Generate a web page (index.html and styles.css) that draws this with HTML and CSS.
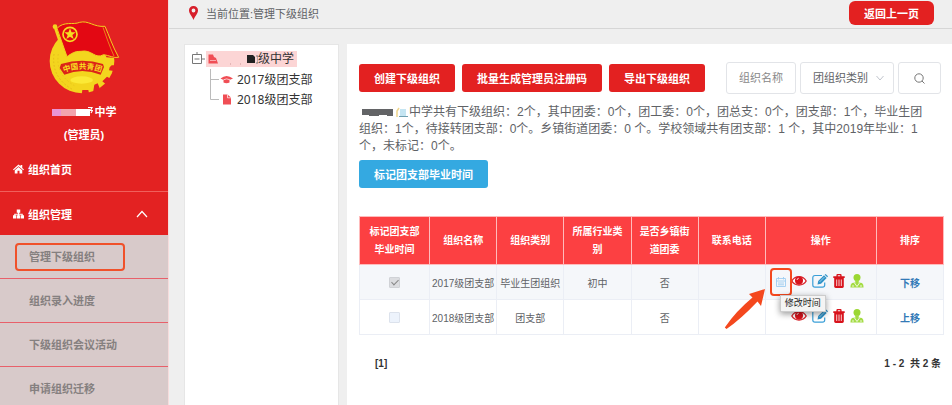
FILE: index.html
```html
<!DOCTYPE html>
<html lang="zh-CN">
<head>
  <meta charset="UTF-8">
  <meta name="viewport" content="width=device-width, initial-scale=1.0">
  <title>管理下级组织</title>
  <link rel="stylesheet" href="styles.css">
</head>
<body>
  <!-- 公用图标 -->
  <svg class="icon-defs" width="0" height="0" aria-hidden="true">
    <symbol id="icon-eye" viewBox="0 0 16 14">
      <path d="M.8 7C4 1.200 12 1.200 15.200 7C12 12.300 4 12.300 .8 7Z" fill="#fff" stroke="#d8232a" stroke-width="1.300"/>
      <circle cx="8" cy="6.500" r="4" fill="#d8131c"/>
      <path d="M6 6a2 2 0 0 1 1.800-1.800" fill="none" stroke="#fff" stroke-width=".8"/>
    </symbol>
    <symbol id="icon-edit" viewBox="0 0 16 14">
      <path d="M10 1.500H3Q.8 1.500 .8 3.700V11Q.8 13.200 3 13.200H10.500Q12.700 13.200 12.700 11V8.500" fill="none" stroke="#3a9fd8" stroke-width="1.200"/>
      <path d="M5.500 10.500L6.200 7L12 1.300L14.700 4L9 9.700Z" fill="#3193c8"/>
      <path d="M12.700 .8L13.600 0L16 2.300L15.200 3.300Z" fill="#3193c8"/>
      <path d="M7.500 8L12.500 3" stroke="#a9d8f0" stroke-width=".8"/>
    </symbol>
    <symbol id="icon-trash" viewBox="0 0 12 14">
      <path fill-rule="evenodd" d="M.3 2.300H3.400V1.200Q3.400.1 4.500.1H7.500Q8.600.1 8.600 1.200V2.300H11.700V3.900H.3ZM4.800 1.300V2.300H7.200V1.300Z" fill="#d8131c"/>
      <path d="M1.200 3.900H10.800V12.500Q10.800 13.900 9.400 13.900H2.600Q1.200 13.900 1.200 12.500Z" fill="#d8131c"/>
      <path d="M3.700 5.500V12M6 5.500V12M8.300 5.500V12" stroke="#fff" stroke-width=".8"/>
    </symbol>
    <symbol id="icon-user" viewBox="0 0 14 14">
      <circle cx="7" cy="3.600" r="3.500" fill="#9bd732"/>
      <path d="M4.800 6H9.200L8.500 8.500L12 9Q13.700 10 13.600 13.600H.4Q.3 10 2 9L5.500 8.500Z" fill="#a4dc45"/>
      <path d="M4.500 9L7 12.500L9.500 9M3 11V13M11 11V13" fill="none" stroke="#fff" stroke-width=".8"/>
    </symbol>
  </svg>

  <div class="layout">
    <aside class="sidebar">
      <div class="profile">
        <svg class="emblem" viewBox="21 18 216 222" role="img" aria-label="团徽">
          <circle cx="123" cy="141" r="97" fill="#f3d51e"/>
          <path d="M172 60L240 90V134L196 130Z" fill="#e32222"/>
          <path d="M212 154L224 154V172L204 169L206 160ZM198 188L212 196L198 214L184 202ZM160 212L170 208L176 222L166 240L156 236ZM124 228H142L145 242H122Z" fill="#e32222"/>
          <path d="M39 120Q30 190 94 226" fill="none" stroke="#dcae18" stroke-width="2" stroke-dasharray="5 6"/>
          <path d="M52 120Q42 180 100 215" fill="none" stroke="#e3bd1c" stroke-width="2" stroke-dasharray="5 6"/>
          <ellipse cx="122" cy="198" rx="34" ry="11" fill="#fbe936"/>
          <path d="M43 42L74 134" stroke="#f3d51e" stroke-width="8"/>
          <circle cx="42" cy="38" r="7" fill="#f3d51e"/>
          <path d="M48 43C70 20 96 34 116 25C142 18 158 40 192 37C204 64 214 96 233 130C218 133 204 124 188 122C162 137 152 105 120 112C100 112 92 118 78 128Z" fill="#e30813" stroke="#f2cf1f" stroke-width="3"/>
          <path d="M186 40C195 66 206 98 219 126" fill="none" stroke="#f0bb20" stroke-width="2"/>
          <circle cx="87" cy="61" r="21" fill="none" stroke="#f5dc21" stroke-width="5"/>
          <path d="M87 43L91.500 55L104 55L94 63L98 75L87 68L76 75L80 63L70 55L82.500 55Z" fill="#f5dc21"/>
          <path d="M60 150Q124 130 186 150L189 159L179 182Q124 160 70 182L56 162Z" fill="#dc2418"/>
          <path id="band" d="M65 176Q124 154 184 176" fill="none"/>
          <text class="emblem-text"><textPath href="#band" startOffset="50%">中国共青团</textPath></text>
        </svg>
        <div class="profile-name">
          <svg class="name-mask" width="41" height="12" viewBox="0 0 41 12" aria-hidden="true">
            <path d="M0 3H9V10H0Z" fill="#e994d4"/>
            <path d="M9 3H24V10H9Z" fill="#f2a4ad"/>
            <path d="M24 3H38V10H24Z" fill="#fff"/>
            <path d="M36 1.500H40L38.500 4.500H40.500L39 7" fill="none" stroke="#fff" stroke-width="1.200"/>
          </svg>
          <span>中学</span>
        </div>
        <div class="profile-role">(管理员)</div>
      </div>
      <nav>
        <a class="nav-item" href="#">
          <svg width="11" height="10" viewBox="0 0 22 20" aria-hidden="true">
            <path d="M11 1L15 4.500V2H18.500V8L22 11L20.500 12.500L11 4.500L1.500 12.500L0 11Z" fill="#fff"/>
            <path d="M11 6L18.500 12.300V19H13V13.500H9V19H3.500V12.300Z" fill="#fff"/>
          </svg>
          组织首页
        </a>
        <a class="nav-item nav-group" href="#">
          <svg width="11" height="10" viewBox="0 0 22 20" aria-hidden="true">
            <path d="M7.500 1H14.500V7.500H12.200V9.500H19.500V12.500H22V19H15.500V12.500H17.300V11.700H12.200V12.500H14.300V19H7.700V12.500H9.800V11.700H4.700V12.500H6.500V19H0V12.500H2.500V9.500H9.800V7.500H7.500Z" fill="#fff"/>
          </svg>
          组织管理
          <svg class="nav-arrow" width="12" height="8" viewBox="0 0 12 8" aria-hidden="true">
            <path d="M1 7L6 1.500L11 7" fill="none" stroke="#fff" stroke-width="1.200"/>
          </svg>
        </a>
        <ul class="submenu">
          <li><a class="current" href="#">管理下级组织</a></li>
          <li><a href="#">组织录入进度</a></li>
          <li><a href="#">下级组织会议活动</a></li>
          <li><a href="#">申请组织迁移</a></li>
        </ul>
      </nav>
    </aside>

    <main class="main">
      <header class="topbar">
        <svg width="9" height="14" viewBox="0 0 9 14" aria-hidden="true">
          <path fill-rule="evenodd" d="M4.500 0A4.400 4.400 0 0 1 9 4.500C9 7.500 6 10 4.500 14C3 10 0 7.500 0 4.500A4.400 4.400 0 0 1 4.500 0ZM4.500 2.600A1.900 1.900 0 1 0 4.500 6.400A1.900 1.900 0 1 0 4.500 2.600Z" fill="#d71f2b"/>
        </svg>
        <span>当前位置:管理下级组织</span>
        <button class="btn btn-back" type="button">返回上一页</button>
      </header>

      <div class="content">
        <!-- 组织树 -->
        <section class="tree">
          <div class="tree-row">
            <svg width="14" height="16" viewBox="0 0 14 16" aria-hidden="true">
              <path d="M1.500 3.500H10.500V12.500H1.500ZM3.500 8H8.500M11 8H14M6 1V3" fill="none" stroke="#777"/>
            </svg>
            <a class="tree-root" href="#">
              <svg width="52" height="14" viewBox="0 0 52 14" aria-hidden="true">
                <path d="M2.500 2.500H7L8 5L10 6L12 11.500H2.500Z" fill="#f04e55"/>
                <path d="M4 8.500L10 8.500" stroke="#fcd5d5" stroke-width=".7"/>
                <path d="M24 12H25M34 12H35" stroke="#c99"/>
                <path d="M41 3H47L49 5V11H41Z" fill="#222"/>
                <path d="M50 4H52V11H50" fill="none" stroke="#777"/>
              </svg>级中学</a>
          </div>
          <div class="tree-row tree-leaf">
            <svg width="30" height="20" viewBox="0 0 30 20" aria-hidden="true">
              <path d="M5.500 0V20M5.500 10.500H14" fill="none" stroke="#bbb"/>
              <path d="M15.500 9.500Q21.500 4.500 28 9.500L24.500 11V13.500Q21.500 15 18.500 13.500V11Z" fill="#f04e55"/>
              <path d="M18.500 10.800Q21.500 9 25 10.800" fill="none" stroke="#fff" stroke-width=".7"/>
            </svg>
            <a href="#">2017级团支部</a>
          </div>
          <div class="tree-row tree-leaf">
            <svg width="30" height="20" viewBox="0 0 30 20" aria-hidden="true">
              <path d="M5.500 0V10.500H14" fill="none" stroke="#bbb"/>
              <path d="M18 5.500H22.500L26 8.500V15.500H18Z" fill="#f04e55"/>
              <path d="M22.500 5.500V8.800H26" fill="none" stroke="#fff" stroke-width=".7"/>
            </svg>
            <a href="#">2018级团支部</a>
          </div>
        </section>

        <section class="panel">
          <div class="toolbar">
            <button class="btn" type="button">创建下级组织</button>
            <button class="btn" type="button">批量生成管理员注册码</button>
            <button class="btn" type="button">导出下级组织</button>
            <form class="search">
              <input class="field field-name" type="text" placeholder="组织名称" aria-label="组织名称">
              <div class="select-wrap">
                <select class="field" aria-label="团组织类别">
                  <option>团组织类别</option>
                </select>
                <svg class="select-arrow" width="8" height="6" viewBox="0 0 8 6" aria-hidden="true">
                  <path d="M.5 1L4 5L7.500 1" fill="none" stroke="#c0c4cc"/>
                </svg>
              </div>
              <button class="field field-search" type="button" aria-label="搜索">
                <svg width="11" height="11" viewBox="0 0 11 11" aria-hidden="true">
                  <path d="M5 .8A4.200 4.200 0 1 0 5 9.200A4.200 4.200 0 1 0 5 .8M8 8L10.500 10.500" fill="none" stroke="#777"/>
                </svg>
              </button>
            </form>
          </div>

          <p class="summary">
            <svg class="summary-mask" width="50" height="12" viewBox="0 0 50 12" aria-hidden="true">
              <path d="M3 3H34V10H28V9H20V10H10V9H3Z" fill="#636466"/>
              <path d="M40 2L38 5V11" fill="none" stroke="#efd58a" stroke-width="1.500"/>
              <path d="M41 3H47V10H41Z" fill="#c5e5f2"/>
              <path d="M40 10.500H49" stroke="#6fa0b0"/>
            </svg>中学共有下级组织：2个，其中团委：0个，团工委：0个，团总支：0个，团支部：1个，毕业生团<br>
            组织：1个，待接转团支部：0个。乡镇街道团委：0 个。学校领域共有团支部：1 个，其中2019年毕业：1<br>
            个，未标记：0个。
          </p>
          <button class="btn btn-mark" type="button">标记团支部毕业时间</button>

          <table class="org-table">
            <thead>
              <tr>
                <th class="col-check">标记团支部毕业时间</th>
                <th>组织名称</th>
                <th>组织类别</th>
                <th>所属行业类别</th>
                <th>是否乡镇街道团委</th>
                <th>联系电话</th>
                <th class="col-ops">操作</th>
                <th>排序</th>
              </tr>
            </thead>
            <tbody>
              <tr>
                <td><input type="checkbox" aria-label="标记2017级团支部" checked disabled></td>
                <td>2017级团支部</td>
                <td>毕业生团组织</td>
                <td>初中</td>
                <td>否</td>
                <td></td>
                <td>
                  <div class="ops">
                    <div class="time-op">
                      <button class="op" type="button" aria-label="修改时间">
                        <svg width="10" height="10" viewBox="0 0 10 10" aria-hidden="true">
                          <path d="M.5 1.500H9.500V9.500H.5ZM.5 4H9.500M2.500 0V2.500M7.500 0V2.500M2 6H8M2 7.800H8" fill="none" stroke="#9fcdf0" stroke-width=".9"/>
                        </svg>
                      </button>
                      <span class="tooltip">修改时间</span>
                      <svg class="pointer" width="42" height="42" viewBox="0 0 42 42" aria-hidden="true">
                        <path d="M41 1L37 18L33.500 13.500Q17 31 2.500 41L.8 39.500Q12 23 28.500 9.500L25 6Z" fill="#f4481e"/>
                      </svg>
                    </div>
                    <button class="op" type="button" aria-label="查看"><svg width="16" height="14"><use href="#icon-eye"/></svg></button>
                    <button class="op" type="button" aria-label="编辑"><svg width="16" height="14"><use href="#icon-edit"/></svg></button>
                    <button class="op" type="button" aria-label="删除"><svg width="12" height="14"><use href="#icon-trash"/></svg></button>
                    <button class="op" type="button" aria-label="管理员"><svg width="14" height="14"><use href="#icon-user"/></svg></button>
                  </div>
                </td>
                <td><a href="#">下移</a></td>
              </tr>
              <tr>
                <td><input type="checkbox" aria-label="标记2018级团支部" disabled></td>
                <td>2018级团支部</td>
                <td>团支部</td>
                <td></td>
                <td>否</td>
                <td></td>
                <td>
                  <div class="ops">
                    <button class="op" type="button" aria-label="查看"><svg width="16" height="14"><use href="#icon-eye"/></svg></button>
                    <button class="op" type="button" aria-label="编辑"><svg width="16" height="14"><use href="#icon-edit"/></svg></button>
                    <button class="op" type="button" aria-label="删除"><svg width="12" height="14"><use href="#icon-trash"/></svg></button>
                    <button class="op" type="button" aria-label="管理员"><svg width="14" height="14"><use href="#icon-user"/></svg></button>
                  </div>
                </td>
                <td><a href="#">上移</a></td>
              </tr>
            </tbody>
          </table>

          <div class="pager">
            <span>[1]</span>
            <span>1 - 2 &nbsp;共 2 条</span>
          </div>
        </section>
      </div>
    </main>
  </div>
</body>
</html>
```

FILE: styles.css
```css
* {
  box-sizing: border-box;
}
body {
  margin: 0;
  font-family: "Liberation Sans", "Noto Sans CJK SC", sans-serif;
  font-size: 11px;
  color: #606266;
}
a {
  color: inherit;
  text-decoration: none;
}
button, input, select {
  font-family: inherit;
  font-size: 11px;
}
svg {
  flex-shrink: 0;
}
.icon-defs {
  position: absolute;
}
.layout {
  display: flex;
  height: 100vh;
  overflow: hidden;
}

/* 左侧菜单 */
.sidebar {
  width: 169px;
  flex-shrink: 0;
  background: #e32222;
  border-right: 1px solid #f6dcdc;
  color: #fff;
  font-weight: bold;
}
.profile {
  display: flex;
  flex-direction: column;
  align-items: center;
  padding-top: 20px;
}
.emblem {
  width: 72px;
  height: 74px;
}
.emblem-text {
  font-size: 23px;
  text-anchor: middle;
  fill: #f8dc20;
}
.profile-name {
  display: flex;
  align-items: center;
  gap: 2px;
  margin-top: 7px;
  line-height: 22px;
}
.profile-role {
  line-height: 24px;
}
.nav-item {
  display: flex;
  align-items: center;
  gap: 4px;
  height: 44px;
  padding: 0 20px 0 13px;
}
.nav-group {
  border-top: 1px solid #f0605c;
}
.nav-arrow {
  margin-left: auto;
}
.submenu {
  list-style: none;
  margin: 0;
  padding: 0;
  background: #d8caca;
  color: #858080;
}
.submenu li {
  display: flex;
  align-items: center;
  height: 44px;
  padding-left: 15px;
  border-bottom: 1px solid #e8606a;
}
.submenu a {
  width: 110px;
  padding: 2px 12px;
  border: 2px solid transparent;
  line-height: 18px;
  white-space: nowrap;
}
.submenu .current {
  padding: 3px 12px;
  border-color: #f0512a;
  border-radius: 4px;
}

/* 右侧内容 */
.main {
  flex: 1;
  min-width: 0;
  display: flex;
  flex-direction: column;
  background: #efefef;
}
.topbar {
  display: flex;
  align-items: center;
  gap: 8px;
  height: 29px;
  padding: 0 18px 3px 20px;
  border-bottom: 1px solid #d6d6d6;
}
.content {
  flex: 1;
  display: flex;
  gap: 8px;
  padding-top: 15px;
  padding-left: 15px;
}
.btn {
  height: 28px;
  padding: 0 15px;
  border: none;
  border-radius: 3px;
  background: #e32121;
  color: #fff;
  font-weight: bold;
  white-space: nowrap;
  cursor: pointer;
}
.btn-back {
  height: 24px;
  margin-left: auto;
  border-radius: 6px;
}
.btn-mark {
  background: #34a9e1;
}

.tree {
  width: 155px;
  flex-shrink: 0;
  padding: 4px 6px;
  background: #fff;
  border: 1px solid #e6e6e6;
  border-bottom: none;
  font-family: "Noto Sans", "Noto Sans CJK SC", sans-serif;
  font-size: 12px;
  color: #333;
}
.tree-row {
  display: flex;
  align-items: center;
  gap: 1px;
  height: 20px;
}
.tree-root {
  display: flex;
  align-items: center;
  height: 16px;
  padding-right: 3px;
  background: #fcd5d5;
  line-height: 16px;
}
.tree-leaf {
  gap: 2px;
  padding-left: 14px;
}

.panel {
  flex: 1;
  min-width: 0;
  padding: 18px 8px 0 12px;
  background: #fff;
}
.toolbar {
  display: flex;
  align-items: center;
  gap: 7px;
}
.search {
  display: flex;
  gap: 4px;
  margin-left: auto;
  padding-right: 3px;
}
.field {
  height: 32px;
  border: 1px solid #e2e4e8;
  border-radius: 3px;
  background: #fff;
  color: #606266;
}
.field::placeholder {
  color: #888;
}
.field-name {
  width: 70px;
  padding: 0 12px;
}
.select-wrap {
  position: relative;
}
.select-wrap select {
  width: 94px;
  padding: 0 12px;
  appearance: none;
}
.select-arrow {
  position: absolute;
  top: 13px;
  right: 10px;
  pointer-events: none;
}
.field-search {
  display: flex;
  align-items: center;
  justify-content: center;
  width: 43px;
}
.summary {
  margin: 10px 0 5px;
  font-size: 12px;
  line-height: 17px;
  white-space: nowrap;
}
.summary-mask {
  vertical-align: -2px;
}

/* 组织列表 */
.org-table {
  width: 100%;
  margin-top: 28px;
  border-collapse: collapse;
  table-layout: fixed;
  font-size: 10px;
  text-align: center;
}
.org-table th {
  height: 48px;
  padding: 0 8px;
  border: 1px solid #fbb;
  background: #fc4042;
  color: #fff;
  line-height: 18px;
}
.org-table td {
  height: 35px;
  padding: 0;
  border: 1px solid #ebeef5;
  white-space: nowrap;
}
.org-table tbody tr:first-child {
  background: #f5f7fa;
}
.org-table td a {
  color: #337ab7;
  font-weight: bold;
}
.org-table .col-check {
  width: 12%;
}
.org-table .col-ops {
  width: 19%;
}
.org-table input {
  display: block;
  width: 11px;
  height: 11px;
  margin: 0 auto;
  appearance: none;
  border: 1px solid #dce2ec;
  border-radius: 1px;
  background: #edf3fc;
}
.org-table input:checked {
  border-color: #d0d2d6;
  background: #dcdde0;
}
.org-table input:checked::before {
  content: "";
  display: block;
  width: 3px;
  height: 6px;
  margin: 0 auto;
  border: solid #888;
  border-width: 0 1px 1px 0;
  transform: rotate(45deg);
}
.ops {
  display: flex;
  align-items: center;
  justify-content: flex-end;
  gap: 5px;
  padding: 0 12px 2px 0;
}
.op {
  display: flex;
  padding: 0;
  border: none;
  background: none;
  cursor: pointer;
}
.time-op {
  position: relative;
  margin: -4px -6px -6px 0;
  padding: 7px 4px;
  border: 2px solid #f4481e;
  border-radius: 4px;
}
.tooltip {
  position: absolute;
  z-index: 2;
  top: 25px;
  left: 8px;
  padding: 0 4px;
  background: #f4f4f4;
  border: 1px solid #ccc;
  box-shadow: 0 2px 6px rgba(0, 0, 0, .4);
  color: #222;
  font-size: 9px;
  line-height: 15px;
}
.pointer {
  position: absolute;
  top: 18px;
  right: 24px;
}
.pager {
  display: flex;
  justify-content: space-between;
  padding: 22px 3px 0 16px;
  color: #333;
  font-size: 10px;
  font-weight: bold;
  line-height: 14px;
}
```
